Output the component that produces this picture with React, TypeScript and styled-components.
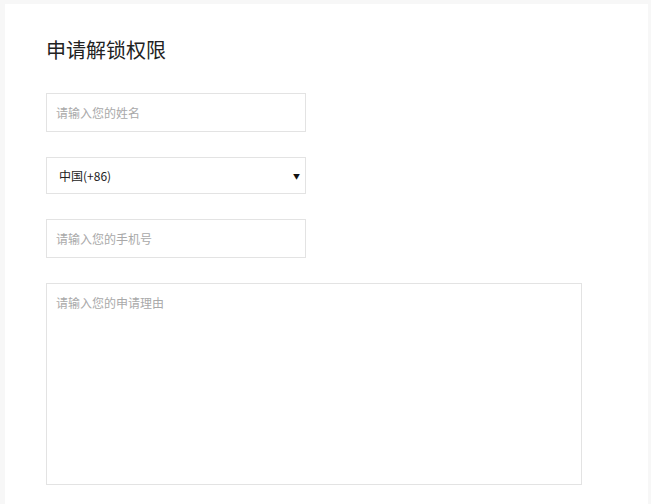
import styled, { createGlobalStyle } from 'styled-components';

const GlobalStyle = createGlobalStyle`
    html, body {
        margin: 0;
        padding: 0;
        background: #f7f7f7;
        font-family: 'Noto Sans CJK SC', 'Noto Sans', sans-serif;
    }
`;

export default function App() {
    return (
        <>
            <GlobalStyle />
            <Panel>
                <Title>申请解锁权限</Title>
                <Form>
                    <Input width={260} placeholder="请输入您的姓名" />
                    <SelectWrap>
                        <Select defaultValue="86">
                            <option value="86">中国(+86)</option>
                        </Select>
                        <Arrow>▼</Arrow>
                    </SelectWrap>
                    <Input width={260} placeholder="请输入您的手机号" />
                    <TextArea placeholder="请输入您的申请理由" />
                </Form>
            </Panel>
        </>
    );
}

const Panel = styled.div`
    background: #fff;
    margin: 4px 3px 0 5px;
    padding: 32px 41px 40px;
    min-height: 460px;
    box-sizing: border-box;
`;

const Title = styled.h1`
    margin: 0;
    font-size: 20px;
    line-height: 28px;
    font-weight: 400;
    color: #222;
`;

const Form = styled.div`
    display: flex;
    flex-direction: column;
    gap: 25px;
    margin-top: 29px;
`;

const Input = styled.input<{ width: number }>`
    width: ${({ width }) => width}px;
    height: 39px;
    box-sizing: border-box;
    border: 1px solid #e3e3e3;
    padding: 0 9px;
    font-family: inherit;
    font-size: 12px;
    color: #333;
    outline: none;
    &::placeholder {
        color: #a9a9a9;
    }
`;

const SelectWrap = styled.div`
    position: relative;
    width: 260px;
    height: 37px;
`;

const Select = styled.select`
    appearance: none;
    width: 100%;
    height: 100%;
    box-sizing: border-box;
    border: 1px solid #e3e3e3;
    border-radius: 0;
    background: #fff;
    padding: 0 12px;
    font-family: inherit;
    font-size: 12px;
    color: #222;
    outline: none;
`;

const Arrow = styled.span`
    position: absolute;
    right: 6px;
    top: 50%;
    transform: translateY(-50%);
    font-size: 7px;
    color: #111;
    pointer-events: none;
`;

const TextArea = styled.textarea`
    width: 536px;
    height: 202px;
    box-sizing: border-box;
    border: 1px solid #e3e3e3;
    padding: 10px 9px;
    font-family: inherit;
    font-size: 12px;
    color: #333;
    resize: none;
    outline: none;
    &::placeholder {
        color: #a9a9a9;
    }
`;
